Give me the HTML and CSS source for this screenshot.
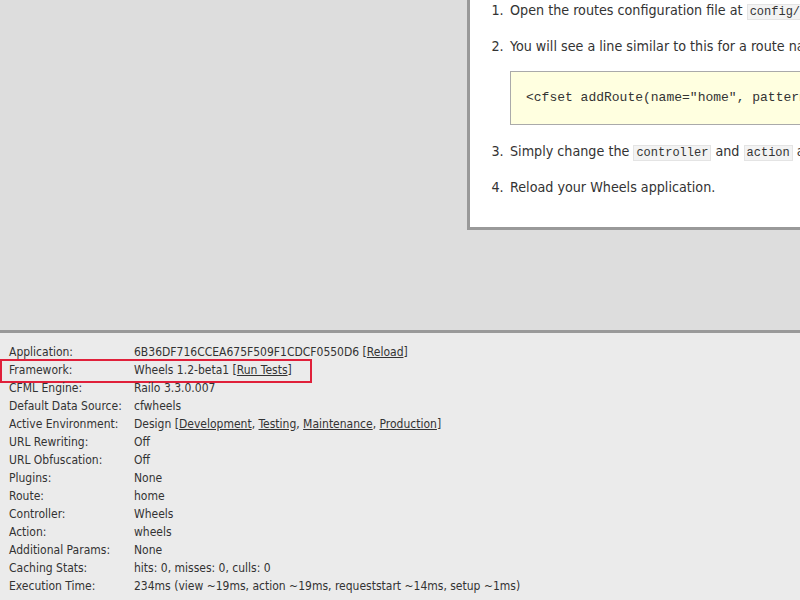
FILE: index.html
```html
<!DOCTYPE html>
<html lang="en">
<head>
<meta charset="utf-8">
<title>Wheels</title>
<link rel="stylesheet" href="styles.css">
</head>
<body>
<div class="top">
  <div class="panel">
    <ol class="steps">
      <li>Open the routes configuration file at <code>config/routes.cfm</code>.</li>
      <li>You will see a line similar to this for a route named <code>home</code>:
        <pre class="snippet">&lt;cfset addRoute(name="home", pattern="", controller="wheels", action="wheels")&gt;</pre>
      </li>
      <li>Simply change the <code>controller</code> and <code>action</code> arguments to a controller and action of your choosing.</li>
      <li>Reload your Wheels application.</li>
    </ol>
  </div>
</div>
<div class="debug">
  <div class="row"><span class="label">Application:</span><span class="value">6B36DF716CCEA675F509F1CDCF0550D6 [<a href="#">Reload</a>]</span></div>
  <div class="row highlighted"><span class="label">Framework:</span><span class="value">Wheels 1.2-beta1 [<a href="#">Run Tests</a>]</span><span class="mark"></span></div>
  <div class="row"><span class="label">CFML Engine:</span><span class="value">Railo 3.3.0.007</span></div>
  <div class="row"><span class="label">Default Data Source:</span><span class="value">cfwheels</span></div>
  <div class="row"><span class="label">Active Environment:</span><span class="value">Design [<a href="#">Development</a>, <a href="#">Testing</a>, <a href="#">Maintenance</a>, <a href="#">Production</a>]</span></div>
  <div class="row"><span class="label">URL Rewriting:</span><span class="value">Off</span></div>
  <div class="row"><span class="label">URL Obfuscation:</span><span class="value">Off</span></div>
  <div class="row"><span class="label">Plugins:</span><span class="value">None</span></div>
  <div class="row"><span class="label">Route:</span><span class="value">home</span></div>
  <div class="row"><span class="label">Controller:</span><span class="value">Wheels</span></div>
  <div class="row"><span class="label">Action:</span><span class="value">wheels</span></div>
  <div class="row"><span class="label">Additional Params:</span><span class="value">None</span></div>
  <div class="row"><span class="label">Caching Stats:</span><span class="value">hits: 0, misses: 0, culls: 0</span></div>
  <div class="row"><span class="label">Execution Time:</span><span class="value">234ms (view ~19ms, action ~19ms, requeststart ~14ms, setup ~1ms)</span></div>
</div>
</body>
</html>
```

FILE: styles.css
```css
html, body {
  margin: 0;
  padding: 0;
  overflow: hidden;
}

body {
  background: #dddddd;
  color: #333333;
  font-family: "DejaVu Sans Condensed", "DejaVu Sans", sans-serif;
  font-stretch: condensed;
}

.top {
  height: 330px;
  overflow: hidden;
}

.panel {
  margin-left: 467px;
  width: 700px;
  height: 227px;
  background: #ffffff;
  border-left: 3px solid #999999;
  border-bottom: 3px solid #999999;
}

.steps {
  margin: 0;
  padding: 0 0 0 40px;
  font-size: 14.2px;
  line-height: 20px;
  white-space: nowrap;
}

.steps li {
  margin-bottom: 16px;
}

.steps li::marker {
  content: counter(list-item) ".\2002";
}

.steps code {
  font-family: "Liberation Mono", monospace;
  font-size: 12px;
  line-height: 1;
  background: #f3f3f3;
  border: 1px solid #e4e4e4;
  padding: 0 2px;
}

.snippet {
  margin: 15px 0 0 0;
  padding: 18px 15px;
  background: #ffffe0;
  border: 1px solid #aaaaaa;
  font-family: "Liberation Mono", monospace;
  font-size: 13px;
  line-height: 16px;
}

.debug {
  border-top: 3px solid #999999;
  background: #ebebeb;
  padding: 10px 9px 9px;
  height: 300px;
  font-size: 12px;
}

.row {
  position: relative;
  display: grid;
  grid-template-columns: 125px auto;
  line-height: 18px;
  white-space: nowrap;
}

.row a {
  color: #333333;
}

.mark {
  position: absolute;
  left: -9px;
  top: -2px;
  width: 308px;
  height: 20px;
  border: 2px solid #e0203a;
}
```
